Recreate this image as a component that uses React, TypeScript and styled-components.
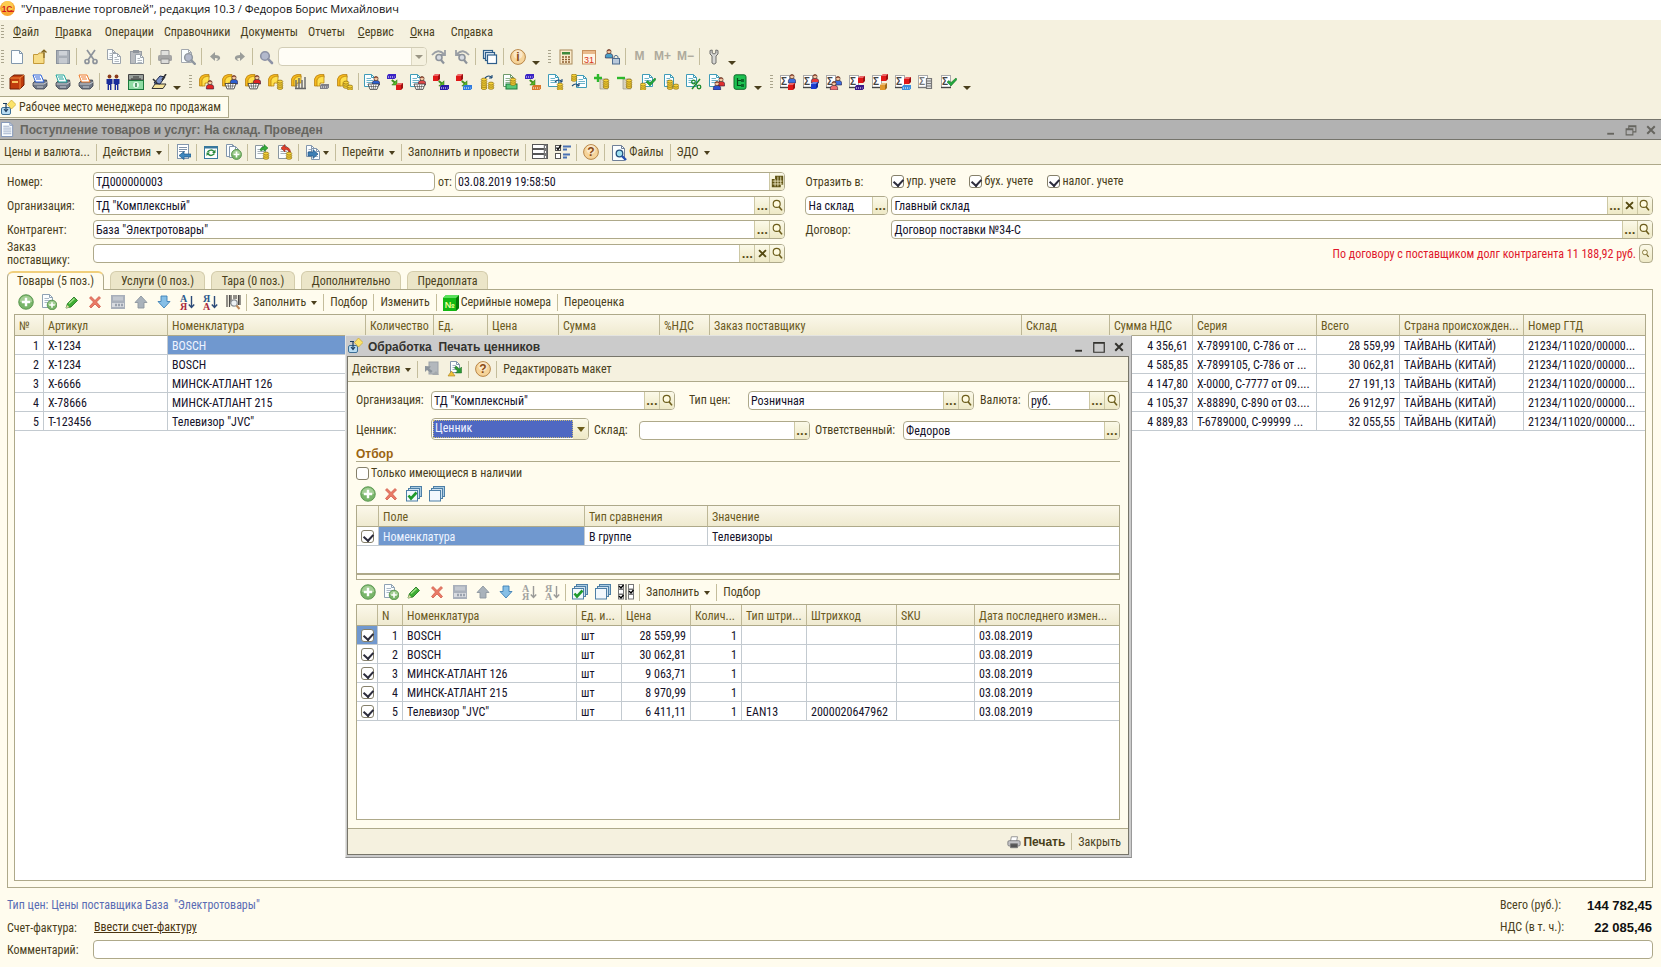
import React from 'react';
import styled, { createGlobalStyle, css } from 'styled-components';

const c = {
  bar: '#f5f1df',
  page: '#fffcee',
  line: '#aea98a',
  text: '#4a3f1c',
  head: '#6b5a1e',
  ink: '#15122a',
  select: '#7098cf',
};

const sans = `'Roboto Condensed', 'Liberation Sans', sans-serif`;
const wide = `'Liberation Sans', Arial, sans-serif`;

const Global = createGlobalStyle`
  * { box-sizing: border-box; }
  body { margin: 0; background: ${c.page}; font: 12px/15px ${sans}; color: ${c.text}; }
  button, input, select { font: inherit; color: inherit; margin: 0; }
`;

/* ---------- icon parts ---------- */

type P = { x?: number; y?: number; f?: string };

const Sheet = ({ x = 0, y = 0, w = 11, h = 13, s = '#3f9cb8', lines = true }: P & { w?: number; h?: number; s?: string; lines?: boolean }) => (
  <g transform={`translate(${x} ${y})`}>
    <path d={`M.5 .5H${w - 3.5}L${w - 0.5} 3.5V${h - 0.5}H.5Z`} fill="#fbfeff" stroke={s} />
    <path d={`M${w - 3.5} .5V3.5H${w - 0.5}`} fill="none" stroke={s} />
    {lines && <path d={`M2.5 4.5H${w - 4}M2.5 6.5H${w - 2}M2.5 8.5H${w - 2}`} stroke={s} opacity=".75" />}
  </g>
);
const Coins = ({ x = 0, y = 0, n = 3 }: P & { n?: number }) => (
  <g transform={`translate(${x} ${y})`} stroke="#8a6a08" strokeWidth=".7">
    {Array.from({ length: n }, (_, i) => <ellipse key={i} cx="3" cy={1.6 + (n - 1 - i) * 2.1} rx="2.8" ry="1.5" fill="#f7d33a" />)}
  </g>
);
const Person = ({ x = 0, y = 0, f = '#2c5fd0' }: P) => (
  <g transform={`translate(${x} ${y})`} strokeWidth=".6">
    <path d="M.4 9V6.6Q.6 4.6 3 4.4H5Q7.4 4.6 7.6 6.6V9Z" fill={f} stroke="#2a1a3a" />
    <circle cx="4" cy="2.6" r="2.1" fill="#f4c7a4" stroke="#4a2a1a" />
    <path d="M1.9 2.2Q2.2 .3 4 .4T6.1 2.2Q4.4 1 1.9 2.2" fill="#7a2a1a" />
  </g>
);
const Cube = ({ x = 0, y = 0, f = '#e01818' }: P) => (
  <g transform={`translate(${x} ${y})`}>
    <path d="M0 2L2 0H7V5L5 7H0Z" fill={f} />
    <path d="M0 2L2 0H7L5 2Z" fill="#fff" opacity=".35" />
    <path d="M5 2L7 0V5L5 7Z" fill="#000" opacity=".3" />
  </g>
);
const Shelf = ({ x = 0, y = 0, f = '#4a2ab8' }: P) => (
  <g transform={`translate(${x} ${y})`}>
    <path d="M0 1.5L1.5 0H9V3.5L7.5 5H0Z" fill={f} />
    <path d="M1 3H7.5" stroke="#fff" strokeDasharray="1 1" />
  </g>
);
const Basket = ({ x = 0, y = 0 }: P) => (
  <g transform={`translate(${x} ${y})`}>
    <path d="M0 0H11L9 5.4H2Z" fill="#fff" stroke="#333" strokeWidth=".8" />
    <path d="M3 .5L4 5M5.5 .5V5M8 .5L7 5M1 2.5H10" stroke="#444" strokeWidth=".6" />
  </g>
);
const Arc = ({ x = 0, y = 0 }: P) => (
  <g transform={`translate(${x} ${y})`} stroke="#b07808" strokeWidth=".7">
    <path d="M.5 12V5Q1.5 1 6 .5H10V3L7 9H4.5L3.5 12Z" fill="#f5b81c" />
    <path d="M3 12V6Q4 2.5 10 2V9H6V12Z" fill="#ffe04e" />
  </g>
);
const Flow = ({ x = 0, y = 0 }: P) => (
  <g transform={`translate(${x} ${y})`}>
    <path d="M.8 1L5 4.5" stroke="#3f8f1c" strokeWidth="2" /><path d="M6 .8V6H.8Z" fill="#58b828" stroke="#2c6a10" strokeWidth=".5" />
  </g>
);
const Tick = ({ x = 0, y = 0 }: P) => <path transform={`translate(${x} ${y})`} d="M0 4L2 2.5L4 4.5L9 0L10 1.5L4 8Z" fill="#22a83c" stroke="#0e6a20" strokeWidth=".5" />;
const Turn = ({ x = 0, y = 0 }: P) => <path transform={`translate(${x} ${y})`} d="M0 3Q4 -1 7 3M7 3V0M7 3H4" fill="none" stroke="#1c4a78" strokeWidth="1.1" />;
const Sum = ({ s = '#444' }: { s?: string }) => (
  <g><rect x=".5" y="1.5" width="9" height="12" fill="#fff" stroke="#aaa" /><path d="M0 13.5H10" stroke={s} strokeWidth="1.4" />
    <text x="1" y="11" fontSize="10" fontFamily="Liberation Sans, sans-serif" fontWeight="700" fill={s}>Σ</text></g>
);
const Printer = ({ f = '#8a8a8a', y = 0 }: P) => (
  <g transform={`translate(0 ${y})`}>
    <path d="M1 8L4 5H14.5L15 8V11L12 14H4L1 11Z" fill={f} stroke="#3a3f4a" strokeWidth=".8" />
    <path d="M1.5 9H12L15 7M5 12H11" stroke="#fff" strokeWidth=".9" opacity=".7" fill="none" />
  </g>
);
const PrintSheet = ({ f }: { f: string }) => (
  <g><Printer f="#6f7886" y={1} /><path d="M1 1H9L12 8H3.5Z" fill="#fff" stroke={f} /><path d="M3 3H8M4 5H9" stroke={f} strokeWidth="1.2" /></g>
);
const Plus = ({ x = 0, y = 0, r = 7.3 }: P & { r?: number }) => (
  <g transform={`translate(${x} ${y})`}>
    <circle r={r} fill="#79b56a" stroke="#4d8d42" strokeWidth=".8" />
    <path d={`M${-r * 0.85} 0A${r * 0.85} ${r * 0.85} 0 0 1 ${r * 0.85} 0Z`} fill="#b5d9a6" opacity=".7" />
    <path d={`M${-r * 0.58} 0H${r * 0.58}M0 ${-r * 0.58}V${r * 0.58}`} stroke="#fff" strokeWidth={r / 3} />
  </g>
);
const Lens = ({ x = 0, y = 0, f = '#8d92a5' }: P) => (
  <g transform={`translate(${x} ${y})`}><circle cx="5" cy="5" r="4.3" fill="#b3b9cc" stroke={f} strokeWidth="1.6" /><path d="M8.2 8.2L12 12" stroke={f} strokeWidth="2.6" strokeLinecap="round" /></g>
);
const Orb = ({ t }: { t: string }) => (
  <g><circle cx="8" cy="8" r="7.4" fill="#f6d49a" stroke="#b07a3a" strokeWidth=".9" /><circle cx="8" cy="5.5" r="4.6" fill="#fff" opacity=".45" />
    <text x="8" y="12.4" fontSize="12" fontWeight="700" textAnchor="middle" fontFamily="Liberation Sans, sans-serif" fill="#8a4a16">{t}</text></g>
);
const Sort = ({ a, b, gray }: { a: string; b: string; gray?: boolean }) => (
  <g fontFamily="Liberation Serif, serif" fontWeight="700" fontSize="10">
    <text x="1" y="7.5" fill={gray ? '#a2a2a0' : '#2c5a8c'}>{a}</text>
    <text x="1" y="15.5" fill={gray ? '#a2a2a0' : '#a8283c'}>{b}</text>
    <path d="M12.5 2V13M9.8 10.5L12.5 13.5L15.2 10.5" stroke={gray ? '#9a9a98' : '#2c4a78'} strokeWidth="1.4" fill="none" />
  </g>
);
const Stack = ({ tick }: { tick?: boolean }) => (
  <g fill="#f2f8fd" stroke="#4d7fa6">
    <rect x="4.5" y=".5" width="11" height="10" fill="#a9cbe2" /><rect x="2.5" y="2.5" width="11" height="10" fill="#cfe2f0" /><rect x=".5" y="4.5" width="11" height="10.5" />
    {tick ? <path d="M2.5 9.5L5 12.5L10.500 6.500" stroke="#1f9a2c" strokeWidth="2.6" fill="none" /> : null}
  </g>
);
const Arrow = ({ up, f, s }: { up?: boolean; f: string; s: string }) => (
  <path d={up ? 'M8 2L14 8.5H11V14H5V8.5H2Z' : 'M8 14L14 7.5H11V2H5V7.5H2Z'} fill={f} stroke={s} strokeWidth=".9" />
);

const icons: Record<string, React.ReactNode> = {
  new: <Sheet x={2} y={1} w={12} h={14} s="#8298ad" lines={false} />,
  open: <g><path d="M1.5 5.5H6L7 4H12V14.5H1.5Z" fill="#f7dc86" stroke="#c49a3a" /><path d="M12 9V1M9.5 3.5L12 1L14.5 3.5" stroke="#80641c" fill="none" strokeWidth="1.2" /></g>,
  save: <g><rect x="1.5" y="1.5" width="13" height="13" fill="#a9afb7" stroke="#8b929c" /><rect x="4" y="2" width="8" height="4.5" fill="#ced2d7" /><rect x="4" y="9" width="8" height="5.5" fill="#c6cad0" /></g>,
  cut: <g stroke="#8d939b" fill="none" strokeWidth="1.7"><path d="M4 1L11 11M12 1L5 11" /><circle cx="4" cy="12.5" r="2" /><circle cx="12" cy="12.5" r="2" /></g>,
  copy: <g><Sheet x={1} y={0} w={9} h={11} s="#9ca4ad" /><Sheet x={6} y={4} w={9} h={11} s="#9ca4ad" /></g>,
  paste: <g><rect x="1.5" y="2.5" width="11" height="12" fill="#b9bcc0" stroke="#979ca3" /><rect x="4" y="1" width="6" height="3" fill="#8f959c" /><Sheet x={6} y={5} w={9} h={10} s="#9ca4ad" /></g>,
  print: <g><path d="M4 7V1.5H12V7" fill="#e0e0dd" stroke="#9b9b9b" /><rect x="1" y="6" width="14" height="6" rx="1.5" fill="#a5a5a5" /><path d="M4 10H12V14.5H4Z" fill="#dcdcda" stroke="#8b8b8b" /></g>,
  preview: <g><Sheet x={1} y={0} w={11} h={14} s="#a3a8ae" lines={false} /><g transform="translate(4 4) scale(.9)"><Lens f="#8f969e" /></g></g>,
  undo: <path d="M8 12Q13 11 12 8Q11 6 7 6V3L2 7.5L7 12V9Q10 9 10 10Z" fill="#9a9d9a" />,
  redo: <path d="M8 12Q3 11 4 8Q5 6 9 6V3L14 7.5L9 12V9Q6 9 6 10Z" fill="#9a9d9a" />,
  find: <g transform="translate(1 2)"><Lens /></g>,
  findNext: <g><path d="M1 6Q7 -1 13 5M14 1V6H9" stroke="#9a9fa5" fill="none" strokeWidth="1.8" /><circle cx="8" cy="8.5" r="3" stroke="#8d939b" strokeWidth="1.6" fill="#d8dce2" /><path d="M10 11L13 14.5" stroke="#8d939b" strokeWidth="2.2" /></g>,
  findPrev: <g><path d="M15 6Q9 -1 3 5M2 1V6H7" stroke="#9a9fa5" fill="none" strokeWidth="1.8" /><circle cx="8" cy="8.5" r="3" stroke="#8d939b" strokeWidth="1.6" fill="#d8dce2" /><path d="M10 11L13 14.5" stroke="#8d939b" strokeWidth="2.2" /></g>,
  windows: <g fill="#e9f2fa" stroke="#2f5f8c" strokeWidth="1.2"><rect x="1.5" y="1.5" width="9" height="8" /><rect x="3.5" y="3.5" width="9" height="8" /><rect x="5.5" y="6" width="9" height="8.5" fill="#fff" /></g>,
  info: <Orb t="i" />,
  help: <Orb t="?" />,
  calc: <g><rect x="2" y="1" width="12" height="14" fill="#fbeccd" stroke="#a98a5a" /><rect x="4" y="3" width="8" height="2.5" fill="#3f8a3c" /><path d="M4 8H12M4 10.5H12M4 13H12" stroke="#8a5a2c" strokeWidth="1.5" strokeDasharray="2 1" /></g>,
  cal: <g><rect x="1.5" y="1.5" width="13" height="13.5" fill="#fff6e6" stroke="#c98f5a" /><rect x="2" y="2" width="12" height="3" fill="#e9b98a" /><text x="8" y="13.6" fontSize="9" textAnchor="middle" fontFamily="Liberation Sans, sans-serif" fill="#d8341c">31</text></g>,
  lock: <g><Person x={1} y={0} f="#4aa0c8" /><rect x="8.5" y="9.5" width="7" height="5.5" fill="#b9c9dc" stroke="#4f6d8f" /><path d="M10 9V7.5Q12 5 14 7.5V9" stroke="#4f6d8f" fill="none" /></g>,
  wrench: <g><path d="M4 1.5V5L6 7V14Q8 16.5 10 14V7L12 5V1.5L9.8 1V4L8 5L6.2 4V1Z" fill="#d5d5d2" stroke="#6f6f6c" /></g>,

  book: <g><path d="M1 4L5 1H15V11L11 15H1Z" fill="#c03c0c" stroke="#6f1e04" /><path d="M1 4H11V15M11 4L15 1" stroke="#f08a3c" fill="none" /><path d="M3 8H9" stroke="#ffd26a" strokeWidth="1.8" /></g>,
  prBlue: <PrintSheet f="#2c62d8" />,
  prTeal: <PrintSheet f="#1fa49a" />,
  prOrange: <PrintSheet f="#ee7a2c" />,
  people: <g fill="#1a2c9a"><circle cx="4.5" cy="2.5" r="1.9" fill="#8a3c1c" /><circle cx="11.5" cy="2.5" r="1.9" fill="#8a3c1c" /><path d="M1.5 5H7.5V10H6.4V16H5V11H4V16H2.6V10H1.5ZM8.5 5H14.5V10H13.4V16H12V11H11V16H9.6V10H8.5Z" /></g>,
  cash: <g><path d="M.5 .5H15.5V6H.5Z" fill="#9aa09c" stroke="#444" /><path d="M5 3H11M3 5H13" stroke="#333" /><rect x=".5" y="6.500" width="15" height="9" fill="#8fdca4" stroke="#1c7a3c" /><ellipse cx="8" cy="11" rx="3" ry="3" fill="#e4f9ea" /><path d="M8 9V13" stroke="#1c7a3c" strokeWidth="1.4" /></g>,
  desk: <g><path d="M1 14.500L4 10H15L12 14.500Z" fill="#f4e29a" stroke="#333" /><path d="M3 9L9 2L14 3L9 10Z" fill="#7c92c8" stroke="#1a2448" /><path d="M11 6L15 0M2 5L6 9" stroke="#333" strokeWidth="1.600" /></g>,

  arcRed: <g><Arc /><Person x={7} y={6} f="#e02424" /></g>,
  arcBasketB: <g><Arc /><Person x={8} y={1} f="#2c5fd0" /><Basket x={3} y={9.5} /></g>,
  arcBasketR: <g><Arc /><Person x={8} y={1} f="#e02424" /><Basket x={3} y={9.5} /></g>,
  arcCoins: <g><Arc /><Coins x={9} y={6} n={4} /></g>,
  arcBars: <g><Arc /><path d="M5 14V6M8 14V4M11 14V6M14 14V3M4 14.5H15" stroke="#666" strokeWidth="1.4" /></g>,
  arcShelf: <g><Arc /><Shelf x={6} y={10} f="#7f7f8a" /></g>,
  arcCoins2: <g><Arc /><Coins x={6} y={7} n={3} /><Coins x={10} y={11} n={2} /></g>,

  docBasketB: <g><Sheet /><Person x={8} y={2} f="#2c5fd0" /><Basket x={4} y={10} /></g>,
  flowShelfCube: <g><Shelf f="#3b24c4" /><Flow x={4} y={5} /><Cube x={9} y={9} /></g>,
  docBasketR: <g><Sheet /><Person x={8} y={2} f="#e04848" /><Basket x={4} y={10} /></g>,
  flowCubeShelf: <g><Cube /><Flow x={5} y={6} /><Shelf x={7} y={11} f="#2a1aa8" /></g>,
  flowCubeShelf2: <g><Cube /><Flow x={5} y={6} /><Shelf x={7} y={11} f="#2c7ae0" /></g>,
  coinsTurn: <g><Coins x={2} y={4} n={5} /><Coins x={9} y={8} n={3} /><Turn x={6} y={1} /></g>,
  docCash: <g><Sheet x={1} s="#6f9a6a" /><rect x="4" y="10" width="11" height="5" fill="#58c878" stroke="#1c7a3c" /><Coins x={8} y={4} n={3} /></g>,
  flowShelfOrange: <g><Shelf f="#3b24c4" /><Flow x={4} y={5} /><Shelf x={7} y={11} f="#d8782c" /></g>,
  docTurnCoins: <g><Sheet /><Turn x={7} y={5} /><Coins x={9} y={9} n={3} /></g>,
  coinsDoc: <g><Sheet x={5} y={1} /><Coins n={3} /><Turn x={1} y={9} /></g>,
  plusCoins: <g><path d="M6 15V5H14V15Z" fill="#d8d3c0" stroke="#8f8a78" strokeWidth=".6" /><Coins x={9} y={5} n={4} /><path d="M0 4H8M4 0V8" stroke="#2db82c" strokeWidth="2.4" /></g>,
  minusCoins: <g><path d="M6 15V5H14V15Z" fill="#d8d3c0" stroke="#8f8a78" strokeWidth=".6" /><Coins x={9} y={5} n={4} /><path d="M0 4H8" stroke="#2db82c" strokeWidth="2.4" /></g>,
  docTick: <g><Sheet x={2} /><Coins y={9} n={3} /><Tick x={6} y={4} /></g>,
  docCoins: <g><Sheet x={1} w={10} /><Coins x={4} y={6} n={4} /><Coins x={10} y={10} n={2} /></g>,
  docPct: <g><Sheet /><path d="M14 5L6 15" stroke="#1f8a2c" strokeWidth="1.5" /><circle cx="7.5" cy="8" r="1.8" fill="none" stroke="#1f8a2c" strokeWidth="1.3" /><circle cx="13" cy="13" r="1.8" fill="none" stroke="#1f8a2c" strokeWidth="1.3" /></g>,
  docPeople: <g><Sheet /><Person x={8} y={3} f="#e03030" /><Person x={4} y={7} f="#2c4fd0" /></g>,
  green: <g><rect x="2" y=".8" width="12" height="14.5" rx="2" fill="#1cc050" stroke="#0c6a28" /><path d="M5.500 4V11.500H9M5.500 6.500H9" stroke="#064a1a" strokeWidth="1.200" fill="none" /><path d="M9 5H12V8H9ZM9 10H12V13H9Z" fill="#0a6a2a" /></g>,

  sumB: <g><Sum /><Person x={8} y={0} f="#3c6fe0" /><Cube x={8} y={9} /></g>,
  sumR: <g><Sum /><Person x={8} y={0} f="#e83838" /><Cube x={8} y={8} f="#1c3cd0" /></g>,
  sumP: <g><Sum /><Person x={8} y={2} f="#3c6fe0" /><Person x={4} y={7} f="#f07070" /></g>,
  sumC: <g><Sum /><Cube x={9} y={2} /><Shelf x={6} y={11} f="#3b1a8a" /></g>,
  sumC2: <g><Sum /><Cube x={9} y={0} /><Cube x={8} y={9} f="#e0982c" /></g>,
  sumC3: <g><Sum /><Cube x={9} y={3} /><Shelf x={7} y={11} f="#3a90e0" /></g>,
  sumG: <g><Sum s="#777" /><path d="M8.500 4.500H13.500V14.500H8.500ZM8.500 7H13.500M8.500 9.500H13.500M8.500 12H13.500" stroke="#777" fill="#ddd" strokeWidth="1.200" /></g>,
  sumT: <g><Sum /><Tick x={6} y={4} /></g>,

  post: <g><rect x="2.5" y=".5" width="11" height="14" fill="#fff" stroke="#8296ad" /><path d="M4 3.5H12M4 5.5H12M4 7.5H10" stroke="#7f93ab" /><path d="M16 10H9V7.5L4 11.5L9 15.5V13H16Z" fill="#3f86bd" stroke="#1e5a8a" strokeWidth=".7" /></g>,
  refresh: <g><rect x="1.5" y="2.5" width="13" height="12" fill="#fff" stroke="#38789c" /><path d="M1.5 3.5H14.5" stroke="#38789c" strokeWidth="2" /><path d="M4.5 8Q8 4.5 11 7.5M11.5 9.5Q8 13 5 10" stroke="#2b8a3c" strokeWidth="1.5" fill="none" /><path d="M12.5 5.5V9H9ZM3.5 12V8.5H7Z" fill="#2b8a3c" /></g>,
  addCopy: <g><Sheet x={0} y={0} w={10} h={13} s="#8296ad" lines={false} /><Sheet x={3} y={2} w={10} h={12} s="#8296ad" lines={false} /><Plus x={10.5} y={10.5} r={5} /></g>,
  docGreen: <g><Sheet x={1} y={1} w={11} h={14} s="#8b979f" /><path d="M6 6Q7 2.500 10 3V.5L14 4L10 7.500V5.500Q8 5.500 7.500 7Z" fill="#36ac3a" stroke="#16701c" strokeWidth=".5" /><Coins x={9} y={8} n={3} /></g>,
  docRed: <g><Sheet x={1} y={1} w={11} h={14} s="#8b979f" /><path d="M12 8Q12 5.500 8 5.500V8L4 4L8 .5V3Q13 3 13.500 8Z" fill="#e0402c" stroke="#8a1c10" strokeWidth=".5" /><Coins x={9} y={8} n={3} /></g>,
  basedOn: <g><Sheet x={1} y={0} w={9} h={12} s="#8296ad" /><Sheet x={6} y={3} w={9} h={12} s="#8296ad" /><path d="M3 7H8V4.5L13 9L8 13.5V11H3Z" fill="#3f7fb4" stroke="#1d4e7c" strokeWidth=".6" /></g>,
  list: <g fill="#fff" stroke="#555"><rect x=".5" y=".5" width="15" height="4" /><rect x=".5" y="5.5" width="15" height="4" /><rect x=".5" y="10.5" width="15" height="4" /><path d="M13.500 .500V14.500" strokeWidth="3.500" stroke="#777" /><path d="M13.500 2V4M13.500 7V9M13.500 12V14" stroke="#fff" /></g>,
  checks: <g><rect x=".5" y="1.5" width="5" height="5" fill="#fff" stroke="#555" /><rect x=".5" y="9.5" width="5" height="5" fill="#fff" stroke="#555" /><path d="M1.5 3.5L3 5.5L6 1" stroke="#111" fill="none" strokeWidth="1.4" /><path d="M8 2.5H16M8 5.5H12M8 10.5H15M8 13.5H12" stroke="#4a72b4" strokeWidth="2" /></g>,
  files: <g><Sheet x={1} y={0} w={13} h={16} s="#6f7f98" lines={false} /><circle cx="8.5" cy="8.5" r="3.3" fill="#9fe0f0" stroke="#24507c" strokeWidth="1.3" /><path d="M11 11L15 15" stroke="#2450b0" strokeWidth="2.4" /></g>,

  add: <Plus x={8} y={8} />,
  addDoc: <g><Sheet x={1} y={0} w={11} h={14} s="#8fa2b4" /><Plus x={11} y={11} r={4.8} /></g>,
  edit: <g><path d="M2 14L3.5 9.5L10 3L13.5 6.5L7 13Z" fill="#3fae34" stroke="#1d6e1a" strokeWidth=".8" /><path d="M2 14L3 11L5.5 13.3Z" fill="#e8dcae" /><path d="M5 9.5L10.5 4.5" stroke="#a3e28c" strokeWidth="1.4" /></g>,
  del: <path d="M2.500 4L4 2.500L8 6.500L12 2.500L13.500 4L9.500 8L13.500 12.500L12 14L8 10L4 14L2.500 12.500L6.500 8Z" fill="#ea7a66" stroke="#cc5242" strokeWidth=".7" />,
  saveGray: <g><rect x="1" y="1" width="14" height="14" fill="#a9b0bb" /><rect x="3" y="2.5" width="10" height="4" fill="#c3c8d0" /><path d="M2 11H14" stroke="#d8dbe0" strokeWidth="4" /><path d="M5 11H13" stroke="#9aa2ae" strokeWidth="2.5" strokeDasharray="2 1" /></g>,
  up: <Arrow up f="#a9b2bb" s="#8d969f" />,
  down: <Arrow f="#86bfe6" s="#3d7fb4" />,
  sortA: <Sort a="А" b="Я" />,
  sortZ: <Sort a="Я" b="А" />,
  sortAg: <Sort a="А" b="Я" gray />,
  sortZg: <Sort a="Я" b="А" gray />,
  barcode: <g><path d="M2 1V13M4.5 1V13M6 1V10M9 1V5M11 1V5M13.5 1V11M15 1V11" stroke="#4d4a48" strokeWidth="1.2" /><circle cx="9" cy="9" r="3.2" fill="#eef2f4" stroke="#8a8f94" strokeWidth="1.2" /><path d="M11.5 11.5L14.5 15" stroke="#c08a5a" strokeWidth="2" /></g>,
  serial: <g><path d="M0 3L3 0H16V13L13 16H0Z" fill="#12b812" /><path d="M13 3L16 0V13L13 16Z" fill="#067a06" /><path d="M0 3L3 0H16L13 3Z" fill="#5be05b" /><text x="6.6" y="13" fontSize="9" fontWeight="700" textAnchor="middle" fontFamily="Liberation Sans, sans-serif" fill="#f4ff9a">№</text></g>,
  stackTick: <Stack tick />,
  stack: <Stack />,
  invert: <g fill="#fff" stroke="#777"><rect x=".5" y=".5" width="5" height="4.5" /><rect x=".5" y="5.5" width="5" height="4.5" /><rect x=".5" y="10.5" width="5" height="4.5" /><rect x="10.5" y=".5" width="5" height="4.5" /><rect x="10.5" y="5.5" width="5" height="4.5" /><rect x="10.5" y="10.5" width="5" height="4.5" /><path d="M8 0V16" stroke="#333" /><path d="M1 2L3 4L5.5 1M1 12L3 14L5.5 11M11 7L13 9L15.5 6" stroke="#000" strokeWidth="1.4" fill="none" /></g>,
  setOut: <g><rect x="5" y="1" width="9" height="12" fill="#b3b8bd" stroke="#9ba1a8" /><path d="M1 5V11L3 9L7 12L8.5 10L5 7.5L7 5.5Z" fill="#8b939b" /><path d="M8 14H15L12 10Z" fill="#a3a8ac" /></g>,
  setIn: <g><Sheet x={3} y={0} w={10} h={12} s="#8296ad" /><path d="M14.500 12V6L12.500 8L9 5L7.500 7L10.500 10L8.500 12Z" fill="#2b9a34" stroke="#14661c" strokeWidth=".5" /><path d="M1 15L4.500 10L8 15Z" fill="#f0c23c" stroke="#a8801c" strokeWidth=".6" /></g>,
  printSmall: <g><path d="M4 7L5 2H12L11 7" fill="#fff" stroke="#8a8a8a" /><rect x="1" y="6.500" width="14" height="6" rx="1.500" fill="#c3c3c6" stroke="#7a7a7d" /><path d="M4 10H12V14.500H4Z" fill="#555" stroke="#777" /></g>,
  proc: <g><rect x="1.500" y="7.500" width="9" height="7" rx="1.500" fill="#b9dcf2" stroke="#3d6f96" /><path d="M3 3.500H7M6 3.500V11M4 9L6 11.500L8 9" stroke="#1f3f60" fill="none" strokeWidth="1.200" /><path d="M11.500 0L16 4.500L11.500 9L7.500 4.500Z" fill="#fbe36a" stroke="#c9a32c" strokeWidth=".7" /></g>,
  doc: <g><Sheet x={1} y={0} w={13} h={16} s="#7f93b8" /><path d="M3.500 10.500H12M3.500 12.500H12" stroke="#7f93b8" opacity=".75" /></g>,
  grid: <g><path d="M5 1H15V12H12V15H1V5H5Z" fill="#5e5212" /><path d="M2 7.500H14M2 11H14M5 5V14M8.500 2V14M12 2V12" stroke="#f7f2cd" /></g>,
  mag: <g><circle cx="7" cy="6" r="4.300" fill="#fffbe0" stroke="#6b5c1a" strokeWidth="1.400" /><path d="M10 9.500L13.500 14" stroke="#6b5c1a" strokeWidth="2" /></g>,
  x: <path d="M3 3L13 13M13 3L3 13" stroke="#554a12" strokeWidth="2.800" />,
  min: <path d="M3 13H12" stroke="currentColor" strokeWidth="2.500" />,
  max: <path d="M1 2H15V15H1ZM1 3H15" stroke="currentColor" fill="none" strokeWidth="1.600" />,
  restore: <path d="M1.500 6.500H10.500V14.500H1.500ZM1.500 7.500H10.500M5 6V2.500H14.500V10.500H11M5 3.500H14.500" stroke="currentColor" fill="none" strokeWidth="1.400" />,
  close: <path d="M3 3L13 13M13 3L3 13" stroke="currentColor" strokeWidth="2.600" />,
  logo: <g><circle cx="8" cy="8" r="8" fill="#f9a832" /><circle cx="8" cy="6" r="6" fill="#fddc5c" opacity=".7" /><text x="7.500" y="11.500" fontSize="9" fontWeight="700" textAnchor="middle" fontFamily="Liberation Sans, sans-serif" fill="#d01818">1С</text><path d="M8 11H15" stroke="#d01818" strokeWidth="1.200" /></g>,
};

const Svg = ({ n, s = 16 }: { n: string; s?: number }) => (
  <svg width={s} height={s} viewBox="0 0 16 16" aria-hidden="true">{icons[n]}</svg>
);

/* ---------- bars and buttons ---------- */

const Page = styled.div`display: flex; flex-direction: column; min-height: 100vh; position: relative;`;
const TitleBar = styled.header`
  display: flex; align-items: flex-start; gap: 6px; height: 20px; padding-top: 1px; background: #fff;
  font: 11px/16px 'Open Sans', 'Noto Sans', sans-serif; color: #111;
  h1 { font: inherit; margin: 0; }
`;
const Chrome = styled.div`background: ${c.bar};`;
const Bar = styled.div<{ $h?: number; $line?: boolean }>`
  display: flex; align-items: center; height: ${p => p.$h || 25}px;
  ${p => p.$line && css`background: ${c.bar}; border-bottom: 1px solid ${c.line};`}
`;
const Grip = styled.span`
  width: 5px; height: 14px; margin: 0 2px 0 4px; flex: none;
  background: repeating-linear-gradient(#a9a48c 0 1px, transparent 1px 3px) center / 3px 100% no-repeat;
  &:first-child { margin: 0; }
`;
const Sep = styled.span<{ $w?: number }>`
  flex: none; width: ${p => p.$w || 5}px; height: 17px;
  background: linear-gradient(#c4bd9c, #c4bd9c) center / 1px 100% no-repeat;
`;
const IconButton = styled.button`
  display: flex; align-items: center; justify-content: center; flex: none;
  width: 23px; height: 22px; padding: 0; border: 0; background: none;
`;
const TextButton = styled.button<{ $bold?: boolean; $dim?: boolean }>`
  display: flex; align-items: center; gap: 5px; flex: none; height: 22px; padding: 1px 4px 0; border: 0; background: none; white-space: nowrap;
  svg { margin-right: -3px; }
  ${p => p.$bold && css`font: bold 12px/15px ${wide};`}
  ${p => p.$dim && css`font: bold 12px/15px ${wide}; color: #aeaa9c; width: 23px; padding: 0; justify-content: center;`}
`;
const Down = styled.i`border: 3px solid transparent; border-top: 4px solid ${c.text}; border-bottom: 0; flex: none;`;
const More = styled.button`
  display: flex; align-items: flex-end; justify-content: center; width: 14px; height: 18px; padding: 0 0 1px; border: 0; background: none;
  i { border-width: 4px 4px 0; }
`;
const MenuBar = styled.nav`display: flex; align-items: center; height: 24px;`;
const MenuItem = styled.button<{ $key?: boolean }>`border: 0; background: none; padding: 0 ${p => (p.$key ? 8 : 5)}px; height: 20px;`;
const Search = styled.div`
  display: flex; width: 149px; height: 19px; border: 1px solid #d2cdb6; border-radius: 4px; background: #fffdf6; overflow: hidden;
  input { flex: 1; min-width: 0; border: 0; background: none; padding: 0 4px; }
  button { display: flex; align-items: center; justify-content: center; width: 15px; padding: 0; border: 0; border-left: 1px solid #ddd8c2; background: ${c.bar}; }
  i { border-width: 4px 4px 0; border-top-color: #9a9584; }
`;
const TaskRow = styled.div`display: flex; height: 25px;`;
const Task = styled.button`
  display: flex; align-items: center; gap: 3px; height: 22px; padding: 1px 7px 0 0; margin-top: 2px;
  border: 1px solid ${c.line}; border-left: 0; background: ${c.page};
`;
const DocTitle = styled.div`
  display: flex; align-items: center; height: 21px; background: #b2b2b2; color: #66655f;
  border-top: 1px solid #75746c; border-bottom: 1px solid #75746c; font: bold 12px/15px ${wide};
  h2 { font: inherit; margin: 0 auto 0 5px; padding-top: 1px; }
`;

/* ---------- form parts ---------- */

const Form = styled.section`display: grid; grid-template-columns: 778fr 847fr; gap: 20px; padding: 7px 8px 8px 7px;`;
const Column = styled.div`display: flex; flex-direction: column; gap: 5px; min-width: 0;`;
const Line = styled.div`display: flex; align-items: center; height: 19px; min-width: 0;`;
const Label = styled.label<{ $w?: number }>`flex: none; padding-top: 1px; white-space: nowrap; ${p => p.$w && `width: ${p.$w}px;`}`;
const TwoLine = styled(Label)`white-space: normal; line-height: 13px; padding-right: 20px;`;
const Box = styled.div<{ $w?: number }>`
  display: flex; height: 19px; min-width: 0; border: 1px solid ${c.line}; border-radius: 4px; background: #fff; overflow: hidden;
  ${p => (p.$w ? `flex: none; width: ${p.$w}px;` : 'flex: 1;')}
  input { flex: 1; min-width: 0; width: 0; border: 0; outline: 0; background: none; padding: 1px 2px 0; color: ${c.ink}; }
`;
const InBtn = styled.button`
  display: flex; align-items: center; justify-content: center; flex: none; width: 15px; padding: 0; border: 0;
  border-left: 1px solid #cdc8a4; background: linear-gradient(#fbf9e8, #eee9c6); color: #554a12; font-weight: 700; font-size: 13px;
`;
const LoneBtn = styled(InBtn)`height: 19px; width: 14px; margin-left: 3px; border: 1px solid ${c.line}; border-radius: 4px;`;
const Check = styled.input.attrs({ type: 'checkbox' })`
  appearance: none; display: block; flex: none; position: relative; width: 13px; height: 13px; margin: 0;
  border: 1px solid #85806a; border-radius: 3px; background: #fff;
  &:checked::after {
    content: ''; position: absolute; left: 3px; top: 1px; width: 5px; height: 7px;
    border: solid #2c2c3c; border-width: 0 2px 2px 0; transform: rotate(42deg);
  }
`;
const CheckLabel = styled.label<{ $w?: number }>`display: flex; align-items: center; gap: 2px; white-space: nowrap; ${p => p.$w && `width: ${p.$w}px;`}`;
const Debt = styled.span`margin-left: auto; padding-top: 1px; color: #e0182c; white-space: nowrap;`;

type FieldProps = { id: string; value?: string; w?: number; label: string; btns?: string };
const Field = ({ id, value = '', w, label, btns = '' }: FieldProps) => (
  <Box $w={w}>
    <input id={id} aria-label={label} defaultValue={value} />
    {btns.split('').map(b => (
      <InBtn key={b} aria-label={b === '.' ? 'Выбрать' : b === 'x' ? 'Очистить' : b === 'g' ? 'Календарь' : 'Открыть'}>
        {b === '.' ? '...' : <Svg n={b === 'x' ? 'x' : b === 'g' ? 'grid' : 'mag'} s={b === 'x' ? 11 : 13} />}
      </InBtn>
    ))}
  </Box>
);

/* ---------- tabs and tables ---------- */

const Tabs = styled.div`display: flex; gap: 6px; padding: 0 7px; height: 18px; position: relative;`;
const Tab = styled.button<{ $on?: boolean; $w: number }>`
  width: ${p => p.$w}px; height: 18px; padding: 2px 0 0; border: 1px solid #d3ccab; border-bottom: 0; border-radius: 6px 6px 0 0; background: #ebe5c8;
  ${p => p.$on && css`height: 19px; padding-top: 0; background: ${c.page}; border-color: ${c.line}; border-top: 2px solid #f0cf7c;`}
`;
const Panel = styled.section`display: flex; flex-direction: column; flex: 1; margin: 0 8px 0 7px; padding: 0 6px 6px; border: 1px solid ${c.line};`;
const TableBox = styled.div<{ $h?: number }>`
  overflow: hidden; border: 1px solid ${c.line}; background: #fff; ${p => (p.$h ? `height: ${p.$h}px; border-bottom-width: 2px;` : 'flex: 1;')}
`;
const Table = styled.table`
  width: 100%; table-layout: fixed; border-collapse: separate; border-spacing: 0; color: ${c.ink};
  th, td { overflow: hidden; white-space: nowrap; text-align: left; padding: 2px 4px 0 4px; }
  th { height: 21px; font-weight: 400; color: ${c.head}; background: linear-gradient(#fbf8ea, #efead0); border-right: 1px solid #bdb796; border-bottom: 1px solid ${c.line}; }
  td { height: 19px; border-right: 1px solid #c3cad0; border-bottom: 1px solid #c3cad0; }
  th:last-child, td:last-child { border-right: 0; }
`;
const Td = styled.td<{ $num?: boolean; $on?: boolean; $box?: boolean }>`
  && { ${p => p.$num && 'text-align: right;'} ${p => p.$on && `background: ${c.select}; color: #eef4ff;`} }
  ${Table} && { ${p => p.$box && 'padding: 0 4px;'} }
`;
const Strip = styled.div`height: 5px; border: 1px solid ${c.line}; border-top: 0;`;

const cols: [string, number][] = [
  ['№', 29], ['Артикул', 124], ['Номенклатура', 198], ['Количество', 68], ['Ед.', 54], ['Цена', 71], ['Сумма', 101], ['%НДС', 50],
  ['Заказ поставщику', 312], ['Склад', 88], ['Сумма НДС', 83], ['Серия', 124], ['Всего', 83], ['Страна происхожден...', 124], ['Номер ГТД', 122],
];
const goods = [
  ['X-1234', 'BOSCH', '4 356,61', 'X-7899100, С-786 от ...', '28 559,99'],
  ['X-1234', 'BOSCH', '4 585,85', 'X-7899105, С-786 от ...', '30 062,81'],
  ['X-6666', 'МИНСК-АТЛАНТ 126', '4 147,80', 'X-0000, С-7777 от 09....', '27 191,13'],
  ['X-78666', 'МИНСК-АТЛАНТ 215', '4 105,37', 'X-88890, С-890 от 03....', '26 912,97'],
  ['Т-123456', 'Телевизор "JVC"', '4 889,83', 'Т-6789000, С-99999 ...', '32 055,55'],
];
const tagCols: [string, number][] = [
  ['', 21], ['N', 25], ['Номенклатура', 174], ['Ед. и...', 45], ['Цена', 69], ['Колич...', 51], ['Тип штри...', 65], ['Штрихкод', 90], ['SKU', 78], ['Дата последнего измен...', 145],
];
const tags = [
  ['BOSCH', '28 559,99', '', ''], ['BOSCH', '30 062,81', '', ''], ['МИНСК-АТЛАНТ 126', '9 063,71', '', ''],
  ['МИНСК-АТЛАНТ 215', '8 970,99', '', ''], ['Телевизор "JVC"', '6 411,11', 'EAN13', '2000020647962'],
];
const Head = ({ cols }: { cols: [string, number][] }) => (
  <>
    <colgroup>{cols.map(([t, w], i) => <col key={t + i} style={{ width: w }} />)}</colgroup>
    <thead><tr>{cols.map(([t], i) => <th key={t + i} scope="col">{t}</th>)}</tr></thead>
  </>
);

/* ---------- price tag window ---------- */

const Dialog = styled.section`
  position: absolute; left: 345px; top: 335px; width: 787px; height: 523px; display: flex; flex-direction: column;
  padding: 0 2px 2px 1px; background: #cbcbcb; border: 1px solid; border-color: #e4e4e0 #9a9a9a #8e8e8e #e4e4e0;
`;
const DialogTitle = styled.div`
  display: flex; align-items: center; height: 20px; color: #33322e; font: bold 12px/15px ${wide};
  h2 { font: inherit; margin: 0 auto 0 5px; padding-top: 2px; white-space: pre; }
`;
const WinBtn = styled.button`display: flex; align-items: center; justify-content: center; width: 20px; height: 19px; padding: 1px 0 0; border: 0; background: none; color: inherit;`;
const DialogFrame = styled.div`display: flex; flex-direction: column; flex: 1; border: 1px solid #77756a; background: ${c.page};`;
const DialogBody = styled.div`display: flex; flex-direction: column; flex: 1; padding: 8px;`;
const DLine = styled.div`display: flex; align-items: flex-end; margin-bottom: 8px; label { line-height: 19px; }`;
const DLast = styled(DLine)`margin-bottom: 5px;`;
const Gap = styled.span<{ $w: number }>`flex: none; width: ${p => p.$w}px;`;
const Combo = styled.div`
  display: flex; width: 158px; height: 22px; padding: 1px 0 1px 1px; border: 1px solid ${c.line}; border-radius: 4px; background: #fff; overflow: hidden;
  select { flex: 1; appearance: none; border: 1px dotted #c9bc78; background: #4f68c2; color: #eef2ff; padding: 0 1px 2px; outline: 0; line-height: 15px; }
  span { display: flex; align-items: center; justify-content: center; width: 15px; margin: -1px 0; background: linear-gradient(#fbf9e8, #eee9c6); }
  i { border-width: 5px 4px 0; border-top-color: #6b5c1a; }
`;
const Heading = styled.h3`margin: 0; height: 17px; font: bold 12px/18px ${wide}; color: #9a6410; border-bottom: 1px solid ${c.line};`;
const Only = styled.div`padding: 3px 0 1px; height: 20px; display: flex; align-items: center;`;
const Footer = styled.div`display: flex; align-items: center; justify-content: flex-end; height: 26px; padding-right: 3px; border-top: 1px solid ${c.line}; background: ${c.bar};`;

/* ---------- totals ---------- */

const Bottom = styled.section`padding: 6px 8px 8px 7px;`;
const Row = styled.div`
  display: flex; align-items: center; height: 22px; padding-top: 1px;
  a { color: #4a3410; }
`;
const PriceType = styled.span`color: #5a6cb4; white-space: pre;`;
const Total = styled.span`
  margin-left: auto; display: flex; width: 153px;
  b { margin-left: auto; font: bold 13px/15px ${wide}; color: #111; padding-right: 1px; }
`;
const Comment = styled(Line)`margin-top: 2px;`;

/* ---------- toolbars as data ---------- */

const Tool = ({ items, sep }: { items: string; sep?: number }) => (
  <>
    {items.split(' ').map((n, i) =>
      n === '|' ? <Sep key={i} $w={sep} />
      : n === ':' ? <Grip key={i} />
      : n === 'v' ? <More key={i} aria-label="Ещё"><Down /></More>
      : n[0] === 'M' ? <TextButton key={i} $dim>{n}</TextButton>
      : <IconButton key={i} aria-label={n}><Svg n={n} /></IconButton>)}
  </>
);

const menu: [string, number][] = [['Файл', 0], ['Правка', 0], ['Операции', -1], ['Справочники', -1], ['Документы', -1], ['Отчеты', -1], ['Сервис', 0], ['Окна', 0], ['Справка', 2]];

export default function App() {
  return (
    <Page>
      <Global />
      <TitleBar><Svg n="logo" s={15} /><h1>"Управление торговлей", редакция 10.3 / Федоров Борис Михайлович</h1></TitleBar>
      <Chrome>
        <MenuBar>
          <Grip />
          {menu.map(([t, k]) => (
            <MenuItem key={t} $key={k >= 0}>{k < 0 ? t : <>{t.slice(0, k)}<u>{t[k]}</u>{t.slice(k + 1)}</>}</MenuItem>
          ))}
        </MenuBar>
        <Bar>
          <Tool items=": new open save | cut copy paste | print preview | undo redo | find" />
          <Search><input aria-label="Поиск" disabled /><button aria-label="Список"><Down /></button></Search>
          <Tool items="findNext findPrev | windows | info v : calc cal lock | M M+ M− | wrench v" />
        </Bar>
        <Bar>
          <Tool sep={4} items=": book prBlue prTeal prOrange | people cash desk v : arcRed arcBasketB arcBasketR arcCoins arcBars arcShelf arcCoins2 | docBasketB flowShelfCube docBasketR flowCubeShelf flowCubeShelf2 coinsTurn docCash flowShelfOrange docTurnCoins coinsDoc plusCoins minusCoins docTick docCoins docPct docPeople green v : sumB sumR sumP sumC sumC2 sumC3 sumG sumT v" />
        </Bar>
        <TaskRow><Task><Svg n="proc" />Рабочее место менеджера по продажам</Task></TaskRow>
      </Chrome>
      <DocTitle>
        <Svg n="doc" s={15} />
        <h2>Поступление товаров и услуг: На склад. Проведен</h2>
        {['min', 'restore', 'close'].map(n => <WinBtn key={n} aria-label={n}><Svg n={n} s={12} /></WinBtn>)}
      </DocTitle>
      <Bar $line>
        <TextButton>Цены и валюта...</TextButton><Sep />
        <TextButton>Действия <Down /></TextButton><Sep />
        <Tool items="post | refresh addCopy | docGreen docRed |" />
        <TextButton aria-label="Ввести на основании"><Svg n="basedOn" /><Down /></TextButton><Sep />
        <TextButton>Перейти <Down /></TextButton><Sep />
        <TextButton>Заполнить и провести</TextButton><Sep />
        <Tool items="list checks | help |" />
        <TextButton><Svg n="files" />Файлы</TextButton><Sep />
        <TextButton>ЭДО <Down /></TextButton>
      </Bar>
      <Form>
        <Column>
          <Line>
            <Label $w={86} htmlFor="num">Номер:</Label><Field id="num" label="Номер" value="ТД000000003" w={342} />
            <Gap $w={3} /><Label $w={17} htmlFor="date">от:</Label><Field id="date" label="от" value="03.08.2019 19:58:50" btns="g" />
          </Line>
          <Line><Label $w={86} htmlFor="org">Организация:</Label><Field id="org" label="Организация" value={'ТД "Комплексный"'} btns=".o" /></Line>
          <Line><Label $w={86} htmlFor="agent">Контрагент:</Label><Field id="agent" label="Контрагент" value={'База "Электротовары"'} btns=".o" /></Line>
          <Line><TwoLine $w={86} htmlFor="order">Заказ поставщику:</TwoLine><Field id="order" label="Заказ поставщику" btns=".xo" /></Line>
        </Column>
        <Column>
          <Line>
            <Label as="span" $w={86}>Отразить в:</Label>
            <CheckLabel $w={78}><Check defaultChecked />упр. учете</CheckLabel>
            <CheckLabel $w={78}><Check defaultChecked />бух. учете</CheckLabel>
            <CheckLabel><Check defaultChecked />налог. учете</CheckLabel>
          </Line>
          <Line><Field id="to" label="Вид поступления" value="На склад" w={83} btns="." /><Gap $w={3} /><Field id="store" label="Склад" value="Главный склад" btns=".xo" /></Line>
          <Line><Label $w={86} htmlFor="contract">Договор:</Label><Field id="contract" label="Договор" value="Договор поставки №34-С" btns=".o" /></Line>
          <Line><Debt>По договору с поставщиком долг контрагента 11 188,92 руб.</Debt><LoneBtn aria-label="Открыть расчеты"><Svg n="mag" s={9} /></LoneBtn></Line>
        </Column>
      </Form>
      <Tabs role="tablist">
        <Tab role="tab" aria-selected $on $w={97}>Товары (5 поз.)</Tab>
        <Tab role="tab" $w={95}>Услуги (0 поз.)</Tab>
        <Tab role="tab" $w={84}>Тара (0 поз.)</Tab>
        <Tab role="tab" $w={100}>Дополнительно</Tab>
        <Tab role="tab" $w={81}>Предоплата</Tab>
      </Tabs>
      <Panel>
        <Bar $h={24}>
          <Tool items="add addDoc edit del saveGray up down sortA sortZ barcode |" />
          <TextButton>Заполнить <Down /></TextButton><Sep />
          <TextButton>Подбор</TextButton><Sep />
          <TextButton>Изменить</TextButton><Sep />
          <TextButton><Svg n="serial" />Серийные номера</TextButton><Sep />
          <TextButton>Переоценка</TextButton>
        </Bar>
        <TableBox>
          <Table>
            <Head cols={cols} />
            <tbody>
              {goods.map((g, i) => (
                <tr key={i}>
                  <Td $num>{i + 1}</Td><Td>{g[0]}</Td><Td $on={i === 0}>{g[1]}</Td>
                  <Td /><Td /><Td /><Td /><Td /><Td /><Td />
                  <Td $num>{g[2]}</Td><Td>{g[3]}</Td><Td $num>{g[4]}</Td><Td>ТАЙВАНЬ (КИТАЙ)</Td><Td>21234/11020/00000...</Td>
                </tr>
              ))}
            </tbody>
          </Table>
        </TableBox>
      </Panel>
      <Bottom>
        <Row><PriceType>{'Тип цен: Цены поставщика База  "Электротовары"'}</PriceType><Total>Всего (руб.): <b>144 782,45</b></Total></Row>
        <Row><Label as="span" $w={87}>Счет-фактура:</Label><a href="#invoice">Ввести счет-фактуру</a><Total>НДС (в т. ч.): <b>22 085,46</b></Total></Row>
        <Comment><Label $w={86} htmlFor="comment">Комментарий:</Label><Field id="comment" label="Комментарий" /></Comment>
      </Bottom>

      <Dialog role="dialog" aria-label="Печать ценников">
        <DialogTitle>
          <Svg n="proc" /><h2>{'Обработка  Печать ценников'}</h2>
          {['min', 'max', 'close'].map(n => <WinBtn key={n} aria-label={n}><Svg n={n} s={12} /></WinBtn>)}
        </DialogTitle>
        <DialogFrame>
          <Bar $line>
            <TextButton>Действия <Down /></TextButton><Sep />
            <Tool items="setOut setIn | help |" />
            <TextButton>Редактировать макет</TextButton>
          </Bar>
          <DialogBody>
            <DLine>
              <Label $w={75} htmlFor="dorg">Организация:</Label><Field id="dorg" label="Организация" value={'ТД "Комплексный"'} w={244} btns=".o" />
              <Gap $w={14} /><Label $w={59} htmlFor="ptype">Тип цен:</Label><Field id="ptype" label="Тип цен" value="Розничная" w={226} btns=".o" />
              <Gap $w={6} /><Label $w={48} htmlFor="cur">Валюта:</Label><Field id="cur" label="Валюта" value="руб." btns=".o" />
            </DLine>
            <DLast>
              <Label $w={75} htmlFor="tag">Ценник:</Label>
              <Combo><select id="tag"><option>Ценник</option></select><span><Down /></span></Combo>
              <Gap $w={5} /><Label $w={45} htmlFor="dstore">Склад:</Label><Field id="dstore" label="Склад" w={171} btns="." />
              <Gap $w={5} /><Label $w={88} htmlFor="resp">Ответственный:</Label><Field id="resp" label="Ответственный" value="Федоров" btns="." />
            </DLast>
            <Heading>Отбор</Heading>
            <Only><CheckLabel><Check />Только имеющиеся в наличии</CheckLabel></Only>
            <Bar $h={23}><Tool items="add del stackTick stack" /></Bar>
            <TableBox $h={70}>
              <Table>
                <Head cols={[['', 22], ['Поле', 206], ['Тип сравнения', 123], ['Значение', 411]]} />
                <tbody><tr><Td $box><Check defaultChecked aria-label="Использовать" /></Td><Td $on>Номенклатура</Td><Td>В группе</Td><Td>Телевизоры</Td></tr></tbody>
              </Table>
            </TableBox>
            <Strip />
            <Bar $h={24}>
              <Tool items="add addDoc edit del saveGray up down sortAg sortZg | stackTick stack invert |" />
              <TextButton>Заполнить <Down /></TextButton><Sep /><TextButton>Подбор</TextButton>
            </Bar>
            <TableBox>
              <Table>
                <Head cols={tagCols} />
                <tbody>
                  {tags.map((t, i) => (
                    <tr key={i}>
                      <Td $box $on={i === 0}><Check defaultChecked aria-label={`Строка ${i + 1}`} /></Td><Td $num>{i + 1}</Td><Td>{t[0]}</Td><Td>шт</Td>
                      <Td $num>{t[1]}</Td><Td $num>1</Td><Td>{t[2]}</Td><Td>{t[3]}</Td><Td /><Td>03.08.2019</Td>
                    </tr>
                  ))}
                </tbody>
              </Table>
            </TableBox>
          </DialogBody>
          <Footer><TextButton $bold><Svg n="printSmall" s={14} />Печать</TextButton><Sep /><TextButton>Закрыть</TextButton></Footer>
        </DialogFrame>
      </Dialog>
    </Page>
  );
}
